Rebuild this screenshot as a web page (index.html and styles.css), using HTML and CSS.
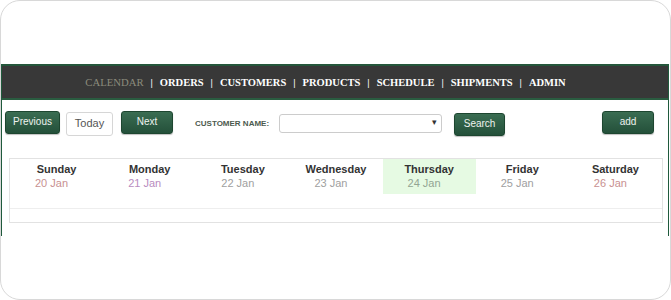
FILE: index.html
```html
<!DOCTYPE html>
<html lang="en">
<head>
    <meta charset="UTF-8">
    <meta name="viewport" content="width=device-width, initial-scale=1.0">
    <title>Calendar</title>
    <link rel="stylesheet" href="styles.css">
</head>
<body>
    <div class="frame">
        <div class="app">
            <div class="nav">
                <a class="nav-link active">Calendar</a>
                <span class="sep">|</span>
                <a class="nav-link">Orders</a>
                <span class="sep">|</span>
                <a class="nav-link">Customers</a>
                <span class="sep">|</span>
                <a class="nav-link">Products</a>
                <span class="sep">|</span>
                <a class="nav-link">Schedule</a>
                <span class="sep">|</span>
                <a class="nav-link">Shipments</a>
                <span class="sep">|</span>
                <a class="nav-link">Admin</a>
            </div>
            <div class="toolbar">
                <button class="button btn-prev">Previous</button>
                <button class="button button-light btn-today">Today</button>
                <button class="button btn-next">Next</button>
                <label class="label">Customer name:</label>
                <div class="select"><span class="arrow">&#9662;</span></div>
                <button class="button btn-search">Search</button>
                <button class="button btn-add">add</button>
            </div>
            <div class="calendar">
                <div class="day">
                    <div class="day-name">Sunday</div>
                    <div class="day-date weekend">20 Jan</div>
                </div>
                <div class="day">
                    <div class="day-name">Monday</div>
                    <div class="day-date monday">21 Jan</div>
                </div>
                <div class="day">
                    <div class="day-name">Tuesday</div>
                    <div class="day-date">22 Jan</div>
                </div>
                <div class="day">
                    <div class="day-name">Wednesday</div>
                    <div class="day-date">23 Jan</div>
                </div>
                <div class="day today">
                    <div class="day-name">Thursday</div>
                    <div class="day-date">24 Jan</div>
                </div>
                <div class="day">
                    <div class="day-name">Friday</div>
                    <div class="day-date">25 Jan</div>
                </div>
                <div class="day">
                    <div class="day-name">Saturday</div>
                    <div class="day-date weekend">26 Jan</div>
                </div>
                <div class="cal-row"></div>
            </div>
        </div>
    </div>
</body>
</html>
```

FILE: styles.css
```css
body {
    margin: 0;
    background: #ffffff;
    font-family: "Liberation Sans", Arial, sans-serif;
}

.frame {
    width: 669px;
    height: 298px;
    border: 1px solid #d8d8d8;
    border-radius: 20px;
    overflow: hidden;
}

.app {
    margin-top: 63px;
    height: 172px;
    border-left: 1px solid #1f5a3c;
    border-right: 1px solid #1f5a3c;
    margin-right: 1px;
}

.nav {
    display: flex;
    justify-content: center;
    align-items: center;
    height: 32px;
    background-color: #383838;
    border-top: 2px solid #24563b;
    border-bottom: 2px solid #2a5c40;
    font-family: "Liberation Serif", "Times New Roman", serif;
    font-size: 10.5px;
    padding-right: 19px;
}

.nav-link {
    color: #ffffff;
    font-weight: bold;
    text-transform: uppercase;
}

.nav-link.active {
    color: #8b8b7c;
    font-weight: normal;
    font-size: 10.7px;
}

.sep {
    color: #ffffff;
    font-weight: bold;
    margin: 0 7px;
}

.toolbar {
    display: flex;
    align-items: center;
    height: 47px;
    padding-left: 3px;
}

.button {
    height: 23px;
    padding: 0 0 2px;
    border: 1px solid #1d4630;
    border-radius: 3px;
    background: linear-gradient(#3a6d52, #24503a);
    color: #eef2ee;
    font-family: "Liberation Sans", Arial, sans-serif;
    font-size: 10px;
    box-shadow: 0 1px 1px rgba(0, 0, 0, 0.25);
    margin-bottom: 2px;
}

.button-light {
    background: #ffffff;
    border: 1px solid #d6d6d6;
    color: #555555;
    box-shadow: none;
    height: 24px;
    margin-bottom: 0;
    font-size: 11px;
}

.btn-prev {
    width: 55px;
}

.btn-today {
    width: 47px;
    margin-left: 6px;
}

.btn-next {
    width: 52px;
    margin-left: 8px;
}

.label {
    margin-left: 22px;
    font-size: 8px;
    font-weight: bold;
    text-transform: uppercase;
    color: #4c5a4e;
}

.select {
    position: relative;
    width: 161px;
    height: 17px;
    margin-left: 10px;
    border: 1px solid #cccccc;
    border-radius: 3px;
    background: #ffffff;
}

.arrow {
    position: absolute;
    right: 4px;
    top: 2px;
    font-size: 9px;
    color: #333333;
}

.btn-search {
    width: 51px;
    margin-left: 12px;
    margin-bottom: -2px;
}

.btn-add {
    width: 52px;
    margin-left: 97px;
    margin-bottom: 3px;
}

.calendar {
    display: grid;
    grid-template-columns: repeat(7, 1fr);
    width: 652px;
    margin: 11px 0 0 7px;
    border: 1px solid #e2e2e2;
}

.day {
    box-sizing: border-box;
    height: 35px;
    padding-top: 4px;
    margin-bottom: 14px;
}

.day.today {
    background-color: #e6fae3;
}

.day-name {
    text-align: center;
    font-size: 11px;
    font-weight: bold;
    color: #333333;
}

.day-date {
    padding-left: 25px;
    margin-top: 2px;
    font-size: 11px;
    color: #a0a0a0;
}

.day-date.weekend {
    color: #c89090;
}

.day-date.monday {
    color: #b88cc0;
}

.day.today .day-date {
    color: #93a593;
}

.cal-row {
    grid-column: 1 / 8;
    height: 13px;
    border-top: 1px solid #eeeeee;
}
```
